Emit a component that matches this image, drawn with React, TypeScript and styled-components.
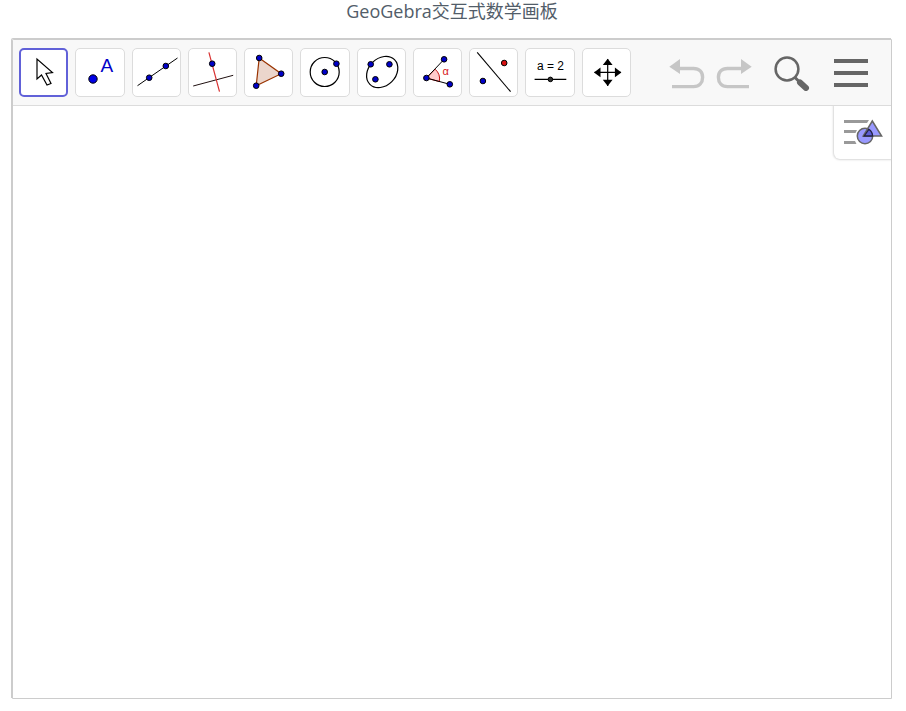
import React from 'react';
import styled, { createGlobalStyle } from 'styled-components';

const GlobalStyle = createGlobalStyle`
  *, *::before, *::after { box-sizing: border-box; }
  body {
    margin: 0;
    background: #fff;
    color: #525d69;
    font-family: "Open Sans", "Noto Sans CJK SC", sans-serif;
  }
`;

const Page = styled.div`
  display: flex;
  flex-direction: column;
  min-height: 100vh;
  padding: 0 14px 12px 12px;
`;

const Title = styled.h1`
  margin: 0 0 17px;
  font-size: 18px;
  font-weight: 400;
  line-height: 22px;
  text-align: center;
`;

const Board = styled.main`
  flex: 1;
  display: flex;
  flex-direction: column;
  border: 1px solid #ccc;
  border-top-left-radius: 2px;
  box-shadow: -1px -1px 0 #ccc;
`;

const Toolbar = styled.header`
  display: flex;
  align-items: center;
  justify-content: space-between;
  height: 66px;
  padding: 0 23px 0 6px;
  background: #f8f8f8;
  border-bottom: 1px solid #dcdcdc;
`;

const Tools = styled.div`
  display: grid;
  grid-template-columns: repeat(11, 1fr);
  gap: 7px;
  width: 612px;
`;

const ToolButton = styled.button<{ $active?: boolean }>`
  display: flex;
  align-items: center;
  justify-content: center;
  height: 49px;
  padding: 0;
  background: #fff;
  border: ${(p) => (p.$active ? '2px solid #6161d8' : '1px solid #dcdcdc')};
  border-radius: 5px;
`;

const ToolIcon = styled.svg`
  display: block;
  width: 45px;
  height: 45px;
  flex: none;
  font-family: "Liberation Sans", sans-serif;
`;

const Actions = styled.div`
  display: flex;
  align-items: center;
`;

const ActionButton = styled.button<{ $gap?: number }>`
  display: flex;
  margin: 0 0 0 ${(p) => p.$gap ?? 0}px;
  padding: 0;
  background: none;
  border: 0;
`;

const Canvas = styled.section`
  flex: 1;
  display: flex;
  justify-content: flex-end;
  align-items: flex-start;
`;

const StyleButton = styled.button`
  display: flex;
  align-items: center;
  justify-content: center;
  width: 57px;
  height: 53px;
  padding: 0 0 0 2px;
  background: #fff;
  border: 0;
  border-bottom-left-radius: 6px;
  box-shadow: 0 0 2px 1px #d8d8d8;
  clip-path: inset(0 0 -4px -4px);
`;

const Dot = ({ x, y, r = 2.8, fill = '#0000c8' }: { x: number; y: number; r?: number; fill?: string }) => (
  <circle cx={x} cy={y} r={r} fill={fill} stroke="#000" strokeWidth="1" />
);

const tools: { name: string; icon: React.ReactNode }[] = [
  {
    name: '移动',
    icon: <path d="M18 11V31L22.5 27L28 37L32 35.5L27 25.5L33.5 24.5Z" fill="#fff" stroke="#000" strokeWidth="1.2" />,
  },
  {
    name: '点',
    icon: (
      <>
        <Dot x={18} y={31} r={4.2} fill="#0000e6" />
        <text x="25.5" y="24" fontSize="19" fill="#0000c8">A</text>
      </>
    ),
  },
  {
    name: '直线',
    icon: (
      <>
        <path d="M5.5 37.7L45.5 10" stroke="#000" />
        <Dot x={17.2} y={29.7} />
        <Dot x={33.8} y={18} />
      </>
    ),
  },
  {
    name: '垂线',
    icon: (
      <>
        <path d="M5.2 38L45.2 27.3" stroke="#201010" />
        <path d="M20.9 4.3L31.5 43.7" stroke="#d83030" strokeWidth="1.2" />
        <Dot x={24.2} y={15.7} />
      </>
    ),
  },
  {
    name: '多边形',
    icon: (
      <>
        <path d="M15.2 10L37.2 25.7L12.2 37.7Z" fill="#ebd6cc" stroke="#993300" strokeWidth="1.2" />
        <Dot x={15.2} y={10} />
        <Dot x={37.2} y={25.7} />
        <Dot x={12.2} y={37.7} />
      </>
    ),
  },
  {
    name: '圆',
    icon: (
      <>
        <circle cx="24.7" cy="24" r="14.5" fill="none" stroke="#000" strokeWidth="1.2" />
        <Dot x={24.7} y={24} />
        <Dot x={36.4} y={15.7} />
      </>
    ),
  },
  {
    name: '椭圆',
    icon: (
      <>
        <ellipse cx="25.2" cy="24" rx="17.4" ry="13.6" transform="rotate(-45 25.2 24)" fill="none" stroke="#000" strokeWidth="1.2" />
        <Dot x={13.7} y={16.3} />
        <Dot x={32.4} y={16.3} />
        <Dot x={18.4} y={31.3} />
      </>
    ),
  },
  {
    name: '角度',
    icon: (
      <>
        <path d="M13.4 30L22.1 21.2A13 13 0 0 1 26.3 33.6Z" fill="#fcc" stroke="#c81414" />
        <path d="M31.1 11.3L13.4 30L36.8 36.3" fill="none" stroke="#000" />
        <text x="29.5" y="27" fontSize="11" fill="#d82020">α</text>
        <Dot x={13.4} y={30} />
        <Dot x={31.1} y={11.3} />
        <Dot x={36.8} y={36.3} />
      </>
    ),
  },
  {
    name: '轴对称',
    icon: (
      <>
        <path d="M8.2 4.3L41.6 43.7" stroke="#000" strokeWidth="1.1" />
        <Dot x={35.2} y={15} fill="#d81010" />
        <Dot x={13.9} y={33} />
      </>
    ),
  },
  {
    name: '滑动条',
    icon: (
      <>
        <text x="24.5" y="22" fontSize="12" textAnchor="middle" fill="#000">a = 2</text>
        <path d="M8.6 31.4H40.3" stroke="#000" strokeWidth="1.2" />
        <Dot x={24.4} y={31.4} r={2.3} fill="#333" />
      </>
    ),
  },
  {
    name: '移动视图',
    icon: (
      <>
        <path d="M12.5 24.4H39M25.7 11V38" stroke="#000" strokeWidth="1.2" />
        <path d="M12 24.4L18.5 19.5V29.3ZM39.4 24.4L32.9 19.5V29.3ZM25.7 10.7L20.8 17H30.6ZM25.7 38.1L20.8 31.8H30.6Z" />
      </>
    ),
  },
];

const UndoArrow = () => (
  <svg width="36" height="32" viewBox="0 -1 36 32" fill="none">
    <path d="M9 10.5H24.5C30.5 10.5 33.6 14 33.6 19.3S30.5 28.6 24.5 28.6H3" stroke="#c6c6c6" strokeWidth="3.4" />
    <path d="M.3 8.7L11 1V16Z" fill="#c6c6c6" />
  </svg>
);

const RedoArrow = () => (
  <svg width="36" height="32" viewBox="0 -1 36 32" fill="none">
    <path d="M27 10.5H11.5C5.5 10.5 2.4 14 2.4 19.3S5.5 28.6 11.5 28.6H33" stroke="#c6c6c6" strokeWidth="3.4" />
    <path d="M35.7 8.7L25 1V16Z" fill="#c6c6c6" />
  </svg>
);

const Magnifier = () => (
  <svg width="36" height="36" viewBox="0 0 36 36" fill="none">
    <circle cx="13" cy="14" r="11.4" stroke="#666" strokeWidth="2.5" />
    <path d="M20.5 22L25 26.5" stroke="#666" strokeWidth="3" />
    <path d="M26 27.5L32 33" stroke="#666" strokeWidth="6" strokeLinecap="round" />
  </svg>
);

const MenuBars = () => (
  <svg width="34" height="28" viewBox="0 0 34 28">
    <path d="M0 0H34V4H0ZM0 12H34V16H0ZM0 24H34V28H0Z" fill="#666" />
  </svg>
);

const StyleIcon = () => (
  <svg width="39" height="27" viewBox="0 0 39 27">
    <path d="M0 1H25L23 4H0ZM0 11H13L11.5 14H0ZM0 22H11L12.5 25H0Z" fill="#999" />
    <circle cx="21" cy="17" r="7.7" fill="#9999ff" stroke="#666" strokeWidth="1.5" />
    <path d="M28.3 2L37.6 17H19.2Z" fill="#9999ff" stroke="#666" strokeWidth="1.5" />
    <path d="M24.8 10.4Q28.4 12.5 28.6 17H20.2Z" fill="#5c5cd6" stroke="#224" strokeWidth="1.3" />
  </svg>
);

export default function App() {
  return (
    <>
      <GlobalStyle />
      <Page>
        <Title>GeoGebra交互式数学画板</Title>
        <Board>
          <Toolbar>
            <Tools>
              {tools.map((tool, i) => (
                <ToolButton key={tool.name} type="button" aria-label={tool.name} $active={i === 0}>
                  <ToolIcon viewBox="2 2 45 45">{tool.icon}</ToolIcon>
                </ToolButton>
              ))}
            </Tools>
            <Actions>
              <ActionButton type="button" aria-label="撤销"><UndoArrow /></ActionButton>
              <ActionButton type="button" aria-label="重做" $gap={11}><RedoArrow /></ActionButton>
              <ActionButton type="button" aria-label="搜索" $gap={22}><Magnifier /></ActionButton>
              <ActionButton type="button" aria-label="菜单" $gap={24}><MenuBars /></ActionButton>
            </Actions>
          </Toolbar>
          <Canvas>
            <StyleButton type="button" aria-label="样式"><StyleIcon /></StyleButton>
          </Canvas>
        </Board>
      </Page>
    </>
  );
}
